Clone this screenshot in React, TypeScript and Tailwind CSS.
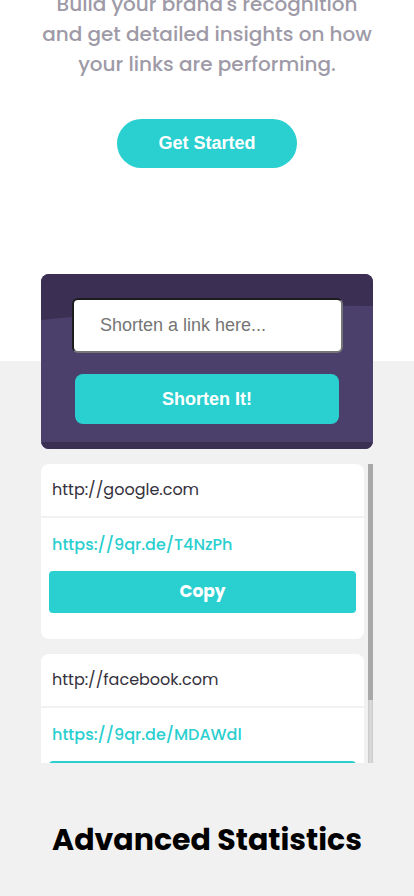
import React from 'react';

const links = [
  { original: 'http://google.com', short: 'https://9qr.de/T4NzPh' },
  { original: 'http://facebook.com', short: 'https://9qr.de/MDAWdl' },
];

const poppins = "font-['Poppins','Inter','Noto_Sans',sans-serif]";

const App = () => {
  return (
    <div className="min-h-[896px] overflow-hidden bg-[#f1f1f1]">
      {/* hero tail */}
      <section className="bg-white flex flex-col items-center pb-[193px]">
        <p className={`${poppins} -mt-[11px] text-center text-[20px] leading-[30px] font-medium text-[#9e9aa7] px-10`}>
          Build your brand's recognition and get detailed insights on how your links are performing.
        </p>
        <button className="mt-10 h-[49px] w-[180px] rounded-full bg-[#2acfcf] text-white text-[18px] font-bold font-['Liberation_Sans',Arial,sans-serif]">
          Get Started
        </button>
      </section>

      <section className="px-[41px]">
        {/* shorten form */}
        <div className="relative -mt-[87px] h-[175px] rounded-lg bg-[#4b3f6b] overflow-hidden">
          <svg className="absolute inset-0 h-full w-full" viewBox="0 0 332 175" preserveAspectRatio="none">
            <path d="M0 0 H332 V32 Q150 30 0 46 Z" fill="#3b3054" />
            <rect x="0" y="168" width="332" height="7" fill="#3b3054" />
          </svg>
          <div className="relative flex flex-col pt-6 font-['Liberation_Sans',Arial,sans-serif]">
            <input
              className="ml-[31px] mr-[30px] h-[55px] rounded-md border-2 border-t-[#1c1c1c] border-l-[#1c1c1c] border-r-[#767676] border-b-[#767676] bg-white pl-[26px] text-[18px] text-[#333] placeholder:text-[#757575] outline-none"
              placeholder="Shorten a link here..."
            />
            <button className="mx-[34px] mt-[21px] h-[50px] rounded-lg bg-[#2acfcf] text-white text-[18px] font-bold">
              Shorten It!
            </button>
          </div>
        </div>

        {/* results list */}
        <div className="mt-[15px] flex h-[299px] gap-1 overflow-hidden">
          <div className="flex-1 flex flex-col gap-[15px]">
            {links.map((l) => (
              <div key={l.short} className={`${poppins} rounded-lg bg-white`}>
                <div className="flex h-[52px] items-center px-[11px] text-[16px] text-[#34313d]">{l.original}</div>
                <div className="h-[2px] bg-[#f1f1f1]" />
                <div className="px-2 pt-[15px] pb-[26px]">
                  <div className="px-[3px] text-[16px] leading-6 font-medium text-[#2acfcf]">{l.short}</div>
                  <button className="mt-[14px] h-[42px] w-full rounded bg-[#2acfcf] text-white text-[17px] font-bold">
                    Copy
                  </button>
                </div>
              </div>
            ))}
          </div>
          <div className="flex w-[5px] flex-col">
            <div className="h-[236px] bg-[#a8a8a8]" />
            <div className="flex-1 bg-gradient-to-r from-[#c8c8c8] via-[#dcdcdc] to-[#c8c8c8]" />
          </div>
        </div>
      </section>

      <h2 className={`${poppins} mt-[59px] text-center text-[30px] leading-9 font-bold text-black`}>
        Advanced Statistics
      </h2>
    </div>
  );
};

export default App;
